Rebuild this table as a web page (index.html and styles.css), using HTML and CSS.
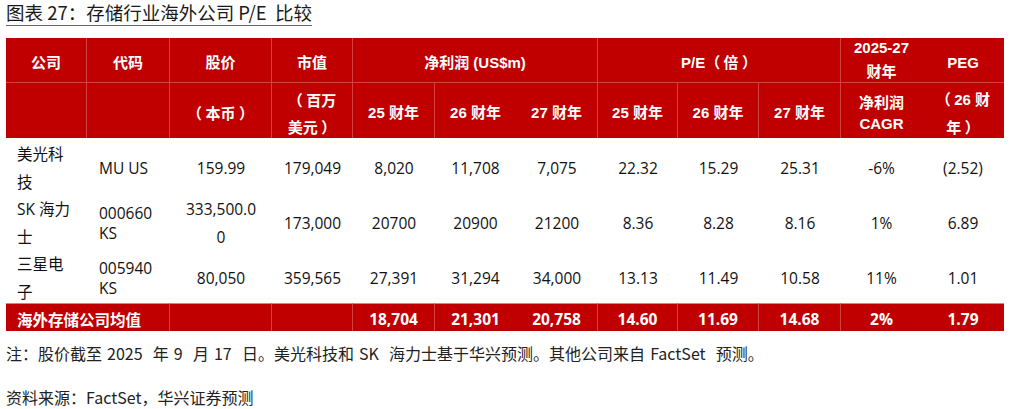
FILE: index.html
```html
<!DOCTYPE html>
<html lang="zh-CN">
<head>
<meta charset="utf-8">
<title>存储行业海外公司 P/E 比较</title>
<link rel="stylesheet" href="styles.css">
</head>
<body>
<div class="title">图表 27：存储行业海外公司 P/E&nbsp; 比较</div>
<div class="tbl">
  <div class="h r1 br">公司</div>
  <div class="h r1 br">代码</div>
  <div class="h r1 br">股价</div>
  <div class="h r1 br">市值</div>
  <div class="h r1 br span3">净利润 (US$m)</div>
  <div class="h r1 br span3"><span>P/E<span class="fw">（ 倍 ）</span></span></div>
  <div class="h r1 two"><span>2025-27<br>财年</span></div>
  <div class="h r1">PEG</div>

  <div class="h r2 br"></div>
  <div class="h r2 br"></div>
  <div class="h r2 br"><span class="fw">（ 本币 ）</span></div>
  <div class="h r2 br lh27"><span class="fw">（ 百万<br>美元 ）</span></div>
  <div class="h r2 br">25 财年</div>
  <div class="h r2">26 财年</div>
  <div class="h r2 br">27 财年</div>
  <div class="h r2 br">25 财年</div>
  <div class="h r2 br">26 财年</div>
  <div class="h r2 br">27 财年</div>
  <div class="h r2 lh21"><span>净利润<br>CAGR</span></div>
  <div class="h r2 lh27"><span><span class="fw">（ </span>26 财<br>年<span class="fw"> ）</span></span></div>

  <div class="c name"><span>美光科<br>技</span></div>
  <div class="c code">MU US</div>
  <div class="c">159.99</div>
  <div class="c">179,049</div>
  <div class="c">8,020</div>
  <div class="c">11,708</div>
  <div class="c">7,075</div>
  <div class="c">22.32</div>
  <div class="c">15.29</div>
  <div class="c">25.31</div>
  <div class="c">-6%</div>
  <div class="c">(2.52)</div>

  <div class="c name"><span>SK 海力<br>士</span></div>
  <div class="c code"><span>000660<br>KS</span></div>
  <div class="c"><span>333,500.0<br>0</span></div>
  <div class="c">173,000</div>
  <div class="c">20700</div>
  <div class="c">20900</div>
  <div class="c">21200</div>
  <div class="c">8.36</div>
  <div class="c">8.28</div>
  <div class="c">8.16</div>
  <div class="c">1%</div>
  <div class="c">6.89</div>

  <div class="c name"><span>三星电<br>子</span></div>
  <div class="c code"><span>005940<br>KS</span></div>
  <div class="c">80,050</div>
  <div class="c">359,565</div>
  <div class="c">27,391</div>
  <div class="c">31,294</div>
  <div class="c">34,000</div>
  <div class="c">13.13</div>
  <div class="c">11.49</div>
  <div class="c">10.58</div>
  <div class="c">11%</div>
  <div class="c">1.01</div>

  <div class="f fname span2 br">海外存储公司均值</div>
  <div class="f br"></div>
  <div class="f br"></div>
  <div class="f br">18,704</div>
  <div class="f">21,301</div>
  <div class="f br">20,758</div>
  <div class="f br">14.60</div>
  <div class="f br">11.69</div>
  <div class="f br">14.68</div>
  <div class="f">2%</div>
  <div class="f">1.79</div>
</div>
<p class="note">注：股价截至 2025&nbsp; 年 9&nbsp; 月 17&nbsp; 日。美光科技和 SK&nbsp; 海力士基于华兴预测。其他公司来自 FactSet&nbsp; 预测。</p>
<p class="note">资料来源：FactSet，华兴证券预测</p>
</body>
</html>
```

FILE: styles.css
```css
* { box-sizing: border-box; }
body {
  margin: 0;
  padding: 0 6px;
  background: #fff;
  color: #111;
  font-family: "Open Sans", "Noto Sans CJK SC", sans-serif;
}
.title {
  display: inline-block;
  font-family: "Noto Sans CJK SC", sans-serif;
  font-size: 18.5px;
  line-height: 25px;
  color: #1a1a1a;
  border-bottom: 1px solid #666;
  white-space: nowrap;
}
.tbl {
  margin-top: 12px;
  width: 998px;
  display: grid;
  grid-template-columns: 81px 83px 102px 81px 82px 81px 82px 80px 81px 82px 81px 82px;
  grid-template-rows: 45px 55px 55px 55px 55px 28px;
}
.h {
  background: #c00000;
  color: #fff;
  font-family: "Liberation Sans", "Noto Sans CJK SC", sans-serif;
  font-weight: 700;
  font-size: 15px;
  display: flex;
  align-items: center;
  justify-content: center;
  text-align: center;
  line-height: 24px;
}
.fw { font-family: "Noto Sans CJK SC", sans-serif; }
.r1 { border-bottom: 1px solid #d4403f; padding-top: 5px; }
.r1.two { padding-top: 0; }
.r2 { padding-top: 5px; }
.lh27 { line-height: 27px; }
.lh21 { line-height: 21px; }
.br { border-right: 1px solid #d4403f; }
.span3 { grid-column: span 3; }
.span2 { grid-column: span 2; }
.c {
  font-size: 15.5px;
  line-height: 28px;
  display: flex;
  align-items: center;
  justify-content: center;
  text-align: center;
  padding-top: 4px;
  color: #111;
}
.c.name { justify-content: flex-start; text-align: left; padding-left: 11px; }
.c.code { justify-content: flex-start; text-align: left; padding-left: 12px; line-height: 20px; }
.f {
  background: #c00000;
  color: #fff;
  font-weight: 700;
  font-size: 15.5px;
  display: flex;
  align-items: center;
  justify-content: center;
  border-top: 1px solid #e57a7a;
  padding-top: 2px;
}
.f.br { border-right: 1px solid #d4403f; }
.f.fname { justify-content: flex-start; padding-left: 11px; font-family: "Noto Sans CJK SC", sans-serif; }
.note {
  margin: 11px 0 0;
  font-family: "Noto Sans CJK SC", sans-serif;
  font-size: 16px;
  line-height: 22px;
  color: #222;
  word-spacing: 1.5px;
}
.note + .note { margin-top: 22px; }
```
